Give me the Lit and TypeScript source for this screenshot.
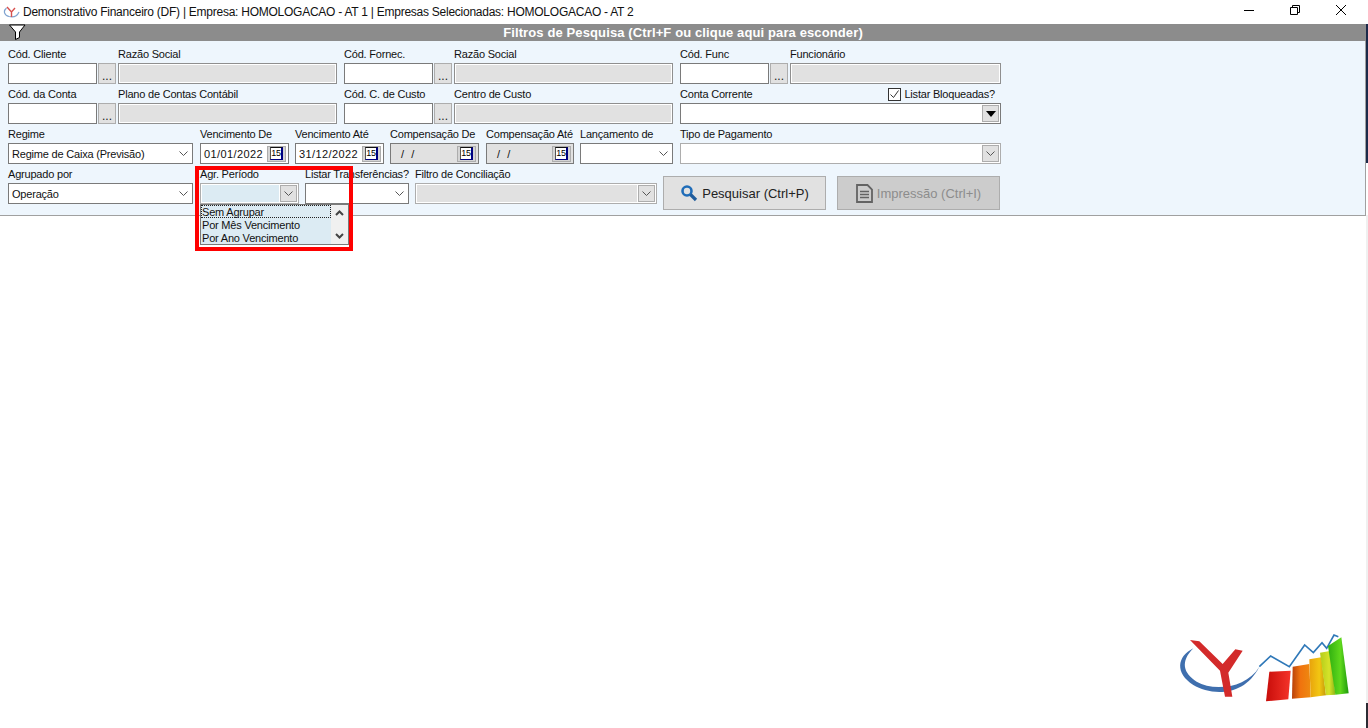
import { LitElement, html, css, svg } from "lit";
import { customElement } from "lit/decorators.js";

const chevron = html`<svg class="chev" width="9" height="5" viewBox="0 0 9 5"><path d="M.5 .5 4.500 4.500 8.500 .5" fill="none" stroke="#555" stroke-width="1"/></svg>`;
const cal = html`<span class="cal"><span class="page">15</span></span>`;

const lookup = (code: string, name: string, cls: string) => html`
  <div class="f ${cls}"><label>${code}</label><div class="in"></div></div>
  <div class="dots"><label>&nbsp;</label><button class="btn3">...</button></div>
  <div class="f grow"><label>${name}</label><div class="in ro"></div></div>`;

const date = (label: string, value: string, off = false, cls = "") => html`
  <div class="f w-date ${cls}"><label>${label}</label>
    <div class="in date ${off ? "off" : ""}"><span class="dv">${value}</span>${cal}</div></div>`;

const combo = (label: string, value: string, cls: string) => html`
  <div class="f ${cls}"><label>${label}</label><div class="in combo"><span>${value}</span>${chevron}</div></div>`;

@customElement("app-root")
export class AppRoot extends LitElement {
  static styles = css`
    :host { display: flex; flex-direction: column; height: 728px; width: 1368px; overflow: hidden; background: #fff;
      font: 11px "Liberation Sans", Arial, sans-serif; letter-spacing: -0.2px; color: #111; position: relative; }
    .title { height: 24px; display: flex; align-items: center; padding-left: 3px; gap: 3px; flex: none; }
    .title .txt { font-size: 12px; letter-spacing: -0.25px; }
    .winbtns { margin-left: auto; margin-right: 4px; display: flex; align-self: flex-start; }
    .winbtns div { width: 46px; height: 20px; display: flex; align-items: center; justify-content: center; }
    .bar { height: 17px; flex: none; margin-right: 2px; background: #8c8c8c; color: #fff; font-weight: bold; display: flex; align-items: center; justify-content: center; font-size: 13px; letter-spacing: 0.12px; position: relative; }
    .bar svg { position: absolute; left: 9px; top: 0; }
    .panel { height: 175px; flex: none; margin-right: 2px; box-sizing: border-box; background: #eef6fd; border-bottom: 1px solid #a0a0a0; border-right: 1px solid #a0a0a0; padding: 3px 0 0 8px; }
    .row { display: flex; height: 40px; width: 993px; }
    .group { display: flex; width: 329px; margin-right: 7px; flex: none; }
    .group.last { width: 321px; margin-right: 0; }
    .f { display: flex; flex-direction: column; flex: none; }
    .f.grow { flex: 1; min-width: 0; }
    label { height: 19px; box-sizing: border-box; padding-top: 2px; line-height: 15px; white-space: nowrap; display: flex; align-items: center; justify-content: space-between; }
    .in { height: 21px; box-sizing: border-box; background: #fff; border: 1px solid #7a7a7a; display: flex; align-items: center; }
    .ro { background: #e1e1e1; border-color: #8f8f8f; box-shadow: inset 0 0 0 1px #fff; }
    .w-code { width: 89px; }
    .dots { width: 18px; margin: 0 2px 0 1px; display: flex; flex-direction: column; flex: none; }
    .btn3 { height: 21px; width: 18px; box-sizing: border-box; border: 1px solid #adadad; background: #e1e1e1; padding: 0; font: 12px "Liberation Sans", sans-serif; line-height: 24px; color: #222; }
    .w-date { width: 89px; margin-right: 6px; }
    .w-date.wide { margin-right: 7px; }
    .w-date.thin { width: 88px; margin-right: 6px; }
    .date { padding-left: 3px; justify-content: space-between; padding-right: 2px; }
    .dv { letter-spacing: 0.4px; white-space: pre; }
    .date.off { background: #e1e1e1; padding-left: 10px; }
    .cal { width: 19px; height: 16px; box-sizing: border-box; background: #d4d4d4; border: 1px solid #adadad; display: flex; align-items: center; justify-content: center; }
    .page { width: 13px; height: 13px; box-sizing: border-box; background: #fff; border-top: 1px solid #111; border-left: 1px solid #555; border-right: 2px solid #000080; border-bottom: 1px solid #000080; font-size: 9px; font-weight: normal; line-height: 11px; text-align: center; letter-spacing: -0.2px; color: #000; overflow: hidden; }
    .combo { padding: 0 4px 0 3px; justify-content: space-between; }
    .w-reg { width: 185px; margin-right: 7px; }
    .w-lanc { width: 93px; margin-right: 7px; }
    .w-tipo { width: 321px; }
    .w-agr { width: 99px; margin-right: 6px; }
    .w-list { width: 104px; margin-right: 6px; }
    .w-fil { width: 242px; margin-right: 6px; }
    .sq { width: 17px; height: 17px; box-sizing: border-box; border: 1px solid #adadad; background: #e1e1e1; display: flex; align-items: center; justify-content: center; flex: none; }
    .endbox { justify-content: flex-end; padding-right: 1px; }
    .soft { border-color: #adadad; }
    .disabled { border-color: #adadad; padding: 1px; gap: 1px; }
    .disabled .fill { flex: 1; height: 100%; }
    .fill.blue { background: #dcebf3; }
    .fill.grey { background: #e1e1e1; }
    .chk { display: flex; align-items: center; gap: 3px; margin-right: 6px; }
    .box { width: 13px; height: 13px; box-sizing: border-box; border: 1px solid #333; background: #fff; display: flex; align-items: center; justify-content: center; }
    .cta { height: 34px; width: 163px; margin-top: 12px; box-sizing: border-box; border: 1px solid #adadad; background: #e1e1e1; display: flex; align-items: center; justify-content: center; gap: 4px; font: 13px "Liberation Sans", sans-serif; flex: none; color: #222; padding: 0; }
    .cta.dis { background: #cccccc; color: #8c8c8c; margin-left: 11px; }
    .main { flex: 1; display: flex; justify-content: flex-end; align-items: flex-end; }
    .logo { display: block; margin-bottom: 18px; }
    .edge { position: absolute; right: 0; width: 2px; }
    .e1 { top: 24px; height: 139px; background: #1c2a4a; }
    .e2 { top: 215px; height: 488px; background: #f0f0f0; }
    .e3 { top: 703px; height: 25px; background: #2b2b33; }
    .drop { position: absolute; left: 200px; top: 204px; width: 149px; height: 41px; box-sizing: border-box; border: 1px solid #7a7a7a; background: #dcebf3; display: flex; }
    .items { flex: 1; line-height: 15px; }
    .items div { height: 13px; padding-left: 1px; box-sizing: border-box; white-space: nowrap; }
    .items div:first-child { outline: 1px dotted #222; outline-offset: -1px; }
    .sb { width: 17px; background: #f0f0f0; display: flex; flex-direction: column; justify-content: space-between; align-items: center; padding: 5px 0; box-sizing: border-box; }
    .mark { position: absolute; left: 195px; top: 166px; width: 158px; height: 85px; box-sizing: border-box; border: 4px solid #ff0000; }
  `;

  render() {
    return html`
      <div class="title">
        <svg width="17" height="14" viewBox="0 0 17 14"><path d="M3.500 3C0 6 1 10 6 11.500c4 1 8 0 10-4.500" fill="none" stroke="#7fa3d0" stroke-width="1.200"/><path d="M4 2 8.500 7 12 3M8.500 7v5" fill="none" stroke="#d8504e" stroke-width="1.400"/></svg>
        <span class="txt">Demonstrativo Financeiro (DF) | Empresa: HOMOLOGACAO - AT 1 | Empresas Selecionadas: HOMOLOGACAO - AT 2</span>
        <div class="winbtns">
          <div><svg width="10" height="10"><path d="M0 5.500h10" stroke="#000"/></svg></div>
          <div><svg width="10" height="10"><path d="M.5 2.500h7v7h-7zM2.500 2.500v-2h7v7h-2" fill="none" stroke="#000"/></svg></div>
          <div><svg width="10" height="10"><path d="M0 0l10 10M10 0 0 10" stroke="#000" fill="none"/></svg></div>
        </div>
      </div>
      <div class="bar">
        <svg width="17" height="16" viewBox="0 0 17 16"><path d="M.5 1h15.500L10.500 8v5.500l-4 2V8z" fill="#fff" stroke="#000"/></svg>
        Filtros de Pesquisa (Ctrl+F ou clique aqui para esconder)
      </div>
      <div class="panel">
        <div class="row">
          <div class="group">${lookup("Cód. Cliente", "Razão Social", "w-code")}</div>
          <div class="group">${lookup("Cód. Fornec.", "Razão Social", "w-code")}</div>
          <div class="group last">${lookup("Cód. Func", "Funcionário", "w-code")}</div>
        </div>
        <div class="row">
          <div class="group">${lookup("Cód. da Conta", "Plano de Contas Contábil", "w-code")}</div>
          <div class="group">${lookup("Cód. C. de Custo", "Centro de Custo", "w-code")}</div>
          <div class="f w-tipo">
            <label>Conta Corrente
              <span class="chk"><span class="box"><svg width="11" height="11"><path d="M1.500 5.500l3 3 5-7" fill="none" stroke="#333"/></svg></span>Listar Bloqueadas?</span></label>
            <div class="in combo endbox">
              <span class="sq"><svg width="10" height="6"><path d="M0 0h10L5 6z" fill="#000"/></svg></span>
            </div>
          </div>
        </div>
        <div class="row">
          ${combo("Regime", "Regime de Caixa (Previsão)", "w-reg")}
          ${date("Vencimento De", "01/01/2022")}
          ${date("Vencimento Até", "31/12/2022")}
          ${date("Compensação De", "/  /", true, "wide")}
          ${date("Compensação Até", "/  /", true, "thin")}
          ${combo("Lançamento de", "", "w-lanc")}
          <div class="f w-tipo"><label>Tipo de Pagamento</label>
            <div class="in combo endbox soft"><span class="sq">${chevron}</span></div></div>
        </div>
        <div class="row">
          ${combo("Agrupado por", "Operação", "w-reg")}
          <div class="f w-agr"><label>Agr. Período</label>
            <div class="in disabled"><div class="fill blue"></div><span class="sq">${chevron}</span></div></div>
          ${combo("Listar Transferências?", "", "w-list")}
          <div class="f w-fil"><label>Filtro de Conciliação</label>
            <div class="in disabled"><div class="fill grey"></div><span class="sq">${chevron}</span></div></div>
          <button class="cta">
            <svg width="18" height="18" viewBox="0 0 18 18"><circle cx="7" cy="7" r="4.500" fill="none" stroke="#1f6cb8" stroke-width="2.600"/><path d="M10.500 10.500l5.500 5.500" stroke="#1f5c9c" stroke-width="3.200"/></svg>
            Pesquisar (Ctrl+P)
          </button>
          <button class="cta dis">
            <svg width="17" height="19" viewBox="0 0 17 19"><path d="M1 1h10.500L16 5.500V18H1z" fill="none" stroke="#636363" stroke-width="1.800"/><path d="M4 7.500h9M4 10.500h9M4 13.500h9" stroke="#636363" stroke-width="1.500"/></svg>
            Impressão (Ctrl+I)
          </button>
        </div>
      </div>
      <div class="main">
        <svg class="logo" width="208" height="90" viewBox="0 0 624 270">
          ${svg`
          <defs>
            <linearGradient id="r"><stop offset="0" stop-color="#c80d0a"/><stop offset="1" stop-color="#f5342a"/></linearGradient>
            <linearGradient id="o"><stop offset="0" stop-color="#b8400a"/><stop offset=".45" stop-color="#f0730e"/><stop offset="1" stop-color="#ee8a10"/></linearGradient>
            <linearGradient id="y"><stop offset="0" stop-color="#e8a20c"/><stop offset=".6" stop-color="#f2c612"/><stop offset="1" stop-color="#c59a0a"/></linearGradient>
            <linearGradient id="l"><stop offset="0" stop-color="#b4cc1a"/><stop offset=".6" stop-color="#d6e32a"/><stop offset="1" stop-color="#8eb414"/></linearGradient>
            <linearGradient id="g"><stop offset="0" stop-color="#2fae10"/><stop offset=".6" stop-color="#5fd81c"/><stop offset="1" stop-color="#1e9a0c"/></linearGradient>
          </defs>
          <path d="M100 85C50 110 45 160 100 195C150 225 250 235 298 140C260 205 160 215 110 185C70 160 60 125 100 85Z" fill="#3f6fae"/>
          <path d="M90 60 118 64 188 132 226 88 248 92 205 158 217 230 195 230 180 152Z" fill="#d32a2a"/>
          <path d="M298 140 332 108 388 140 434 75 460 98 486 68 500 85 522 45 535 50" fill="none" stroke="#2f78b8" stroke-width="5"/>
          <path d="M328 155 392 152 385 238 318 244Z" fill="url(#r)"/>
          <path d="M398 140 448 132 452 232 396 236Z" fill="url(#o)"/>
          <path d="M448 118 484 112 498 226 452 232Z" fill="url(#y)"/>
          <path d="M480 98 514 92 526 224 498 226Z" fill="url(#l)"/>
          <path d="M504 78 544 52 566 220 526 224Z" fill="url(#g)"/>
          `}
        </svg>
      </div>
      <div class="edge e1"></div>
      <div class="edge e2"></div>
      <div class="edge e3"></div>
      <div class="drop">
        <div class="items"><div>Sem Agrupar</div><div>Por Mês Vencimento</div><div>Por Ano Vencimento</div></div>
        <div class="sb">
          <svg width="9" height="6"><path d="M1 5l3.500-3.500L8 5" fill="none" stroke="#444" stroke-width="2"/></svg>
          <svg width="9" height="6"><path d="M1 1l3.500 3.500L8 1" fill="none" stroke="#444" stroke-width="2"/></svg>
        </div>
      </div>
      <div class="mark"></div>
    `;
  }
}
